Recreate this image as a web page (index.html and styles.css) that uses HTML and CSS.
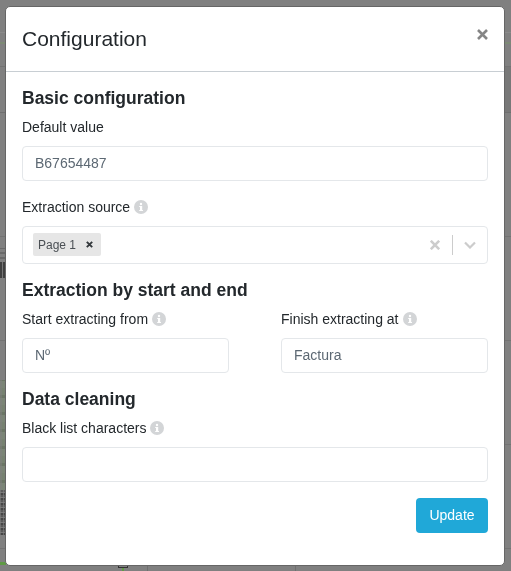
FILE: index.html
```html
<!DOCTYPE html>
<html>
<head>
    <meta charset="utf-8">
    <title>Configuration</title>
    <link rel="stylesheet" href="styles.css">
</head>
<body>
    <!-- page behind the dialog, only its edges show -->
    <div class="page">
        <div class="page-top"></div>
        <div class="page-head"></div>
        <div class="page-tabs"></div>
        <div class="page-bar"></div>
        <div class="page-row page-row-first"></div>
        <div class="page-row"></div>
        <div class="page-row"></div>
        <div class="page-row"></div>
        <div class="page-foot">
            <div class="foot-cell foot-check"><span class="check"></span><span class="check-line"></span></div>
            <div class="foot-cell"></div>
        </div>
        <div class="page-side">
            <div class="side-gap side-gap-top"></div>
            <div class="side-text"></div>
            <div class="side-bars"></div>
            <div class="side-gap side-gap-mid"></div>
            <div class="side-green"></div>
            <div class="side-code"></div>
            <div class="side-gap side-gap-low"></div>
            <div class="side-line"></div>
        </div>
    </div>

    <div class="modal">
        <div class="modal-header">
            <h5 class="modal-title">Configuration</h5>
            <button class="close" type="button">
                <svg width="11" height="11" viewBox="0 0 11 11"><path d="M1 1l9 9M10 1l-9 9" stroke="#858585" stroke-width="2.6" fill="none"/></svg>
            </button>
        </div>
        <div class="modal-body">
            <h3 class="section">Basic configuration</h3>
            <label class="label">Default value</label>
            <input class="input" type="text" value="B67654487">

            <label class="label label-source">Extraction source
                <svg class="info" viewBox="0 0 14 14"><circle cx="7" cy="7" r="7" fill="#d3d5d7"/><rect x="6" y="6" width="2.2" height="5" fill="#fff"/><rect x="5.2" y="6" width="2" height="1" fill="#fff"/><rect x="5.2" y="10" width="3.8" height="1" fill="#fff"/><circle cx="7" cy="4" r="1.2" fill="#fff"/></svg>
            </label>
            <div class="select">
                <div class="select-values">
                    <span class="tag">Page 1
                        <svg class="tag-x" width="7" height="7" viewBox="0 0 7 7"><path d="M.8.8l5.4 5.4M6.200.8L.8 6.200" stroke="#33383c" stroke-width="1.900" fill="none"/></svg>
                    </span>
                </div>
                <svg class="select-clear" width="10" height="10" viewBox="0 0 10 10"><path d="M.8.8l8.400 8.400M9.200.8L.8 9.200" stroke="#cccccc" stroke-width="2.600" fill="none"/></svg>
                <span class="select-sep"></span>
                <svg class="select-arrow" width="12" height="8" viewBox="0 0 12 8"><path d="M1 1.500l5 5 5-5" stroke="#cccccc" stroke-width="2.200" fill="none"/></svg>
            </div>

            <h3 class="section section-start">Extraction by start and end</h3>
            <div class="row">
                <div class="col">
                    <label class="label">Start extracting from
                        <svg class="info" viewBox="0 0 14 14"><circle cx="7" cy="7" r="7" fill="#d3d5d7"/><rect x="6" y="6" width="2.2" height="5" fill="#fff"/><rect x="5.2" y="6" width="2" height="1" fill="#fff"/><rect x="5.2" y="10" width="3.8" height="1" fill="#fff"/><circle cx="7" cy="4" r="1.2" fill="#fff"/></svg>
                    </label>
                    <input class="input" type="text" value="Nº">
                </div>
                <div class="col">
                    <label class="label">Finish extracting at
                        <svg class="info" viewBox="0 0 14 14"><circle cx="7" cy="7" r="7" fill="#d3d5d7"/><rect x="6" y="6" width="2.2" height="5" fill="#fff"/><rect x="5.2" y="6" width="2" height="1" fill="#fff"/><rect x="5.2" y="10" width="3.8" height="1" fill="#fff"/><circle cx="7" cy="4" r="1.2" fill="#fff"/></svg>
                    </label>
                    <input class="input" type="text" value="Factura">
                </div>
            </div>

            <h3 class="section section-clean">Data cleaning</h3>
            <label class="label">Black list characters
                <svg class="info" viewBox="0 0 14 14"><circle cx="7" cy="7" r="7" fill="#d3d5d7"/><rect x="6" y="6" width="2.2" height="5" fill="#fff"/><rect x="5.2" y="6" width="2" height="1" fill="#fff"/><rect x="5.2" y="10" width="3.8" height="1" fill="#fff"/><circle cx="7" cy="4" r="1.2" fill="#fff"/></svg>
            </label>
            <input class="input" type="text" value="">

            <div class="actions">
                <button class="btn" type="button">Update</button>
            </div>
        </div>
    </div>
</body>
</html>
```

FILE: styles.css
```css
* {
    box-sizing: border-box;
}
html, body {
    margin: 0;
    padding: 0;
    height: 100%;
    overflow: hidden;
}
body {
    font-family: "Liberation Sans", Arial, sans-serif;
    background-color: #808080;
    color: #23282c;
    font-size: 14px;
}

/* dimmed page behind the dialog */
.page {
    height: 571px;
    overflow: hidden;
    position: relative;
}
.page-top {
    height: 33px;
    border-bottom: 1px solid #8a8a8a;
}
.page-head {
    height: 11px;
    border-bottom: 2px solid #7d8a75;
}
.page-tabs {
    height: 23px;
    border-bottom: 1px solid #737373;
}
.page-bar {
    height: 46px;
    background: linear-gradient(90deg, #808080 0 6px, #787878 6px);
    border-bottom: 1px solid #6f6f6f;
}
.page-row {
    height: 104px;
    border-bottom: 1px solid #737373;
}
.page-row-first {
    height: 124px;
}
.page-foot {
    display: flex;
    height: 22px;
}
.foot-cell {
    width: 148px;
    border-right: 1px solid #6f6f6f;
}
.foot-check {
    padding-left: 118px;
}
.check {
    display: block;
    width: 10px;
    height: 19px;
    border: 1px solid #333333;
    border-top: none;
}
.check-line {
    display: block;
    width: 2px;
    height: 3px;
    margin-left: 4px;
    background: #5f9a45;
}

/* left edge: thumbnails of the rows */
.page-side {
    position: absolute;
    top: 0;
    left: 0;
    width: 6px;
    height: 571px;
    display: flex;
    flex-direction: column;
}
.side-gap-top {
    height: 248px;
}
.side-text {
    height: 14px;
    background: repeating-linear-gradient(0deg, #808080 0 3px, #6a6a6a 3px 5px);
}
.side-bars {
    height: 16px;
    background: repeating-linear-gradient(90deg, #404040 0 2px, #777777 2px 3px);
}
.side-gap-mid {
    height: 102px;
}
.side-green {
    height: 110px;
    background:
        repeating-linear-gradient(90deg, rgba(128,128,128,0.5) 0 2px, rgba(128,128,128,0) 2px 5px),
        repeating-linear-gradient(0deg, #7b8576 0 7px, #6b7665 7px 10px, #778271 10px 17px);
}
.side-code {
    height: 45px;
    background:
        repeating-linear-gradient(90deg, rgba(128,128,128,0.6) 0 1px, rgba(128,128,128,0) 1px 3px),
        repeating-linear-gradient(0deg, #454545 0 2px, #777777 2px 3px, #5a5a5a 3px 5px);
}
.side-gap-low {
    height: 27px;
}
.side-line {
    height: 3px;
    background: #5f9a45;
}

/* dialog */
.modal {
    position: absolute;
    top: 6px;
    left: 5px;
    will-change: transform;
    width: 500px;
    height: 560px;
    background: #fff;
    border: 1px solid #666666;
    border-radius: 5px;
}
.modal-header {
    height: 65px;
    padding: 16px;
    border-bottom: 1px solid #c8ced3;
    display: flex;
    justify-content: space-between;
}
.modal-title {
    margin: 0;
    font-size: 21px;
    font-weight: 400;
    line-height: 31px;
}
.close {
    background: none;
    border: none;
    padding: 0;
    margin: 6px 0 0;
    height: 11px;
    line-height: 0;
    cursor: pointer;
}
.modal-body {
    padding: 16px;
}
.section {
    margin: 0 0 8px;
    font-size: 17.5px;
    font-weight: 700;
    line-height: 21px;
}
.section-start {
    margin-top: 16px;
}
.section-clean {
    margin-top: 16px;
}
.label {
    display: flex;
    align-items: center;
    gap: 4px;
    line-height: 21px;
    margin-bottom: 8px;
}
.label-source {
    margin-top: 16px;
}
.info {
    width: 14px;
    height: 14px;
    margin-top: -2px;
}
.input {
    display: block;
    width: 100%;
    height: 35px;
    padding: 4px 12px 6px;
    border: 1px solid #e4e7ea;
    border-radius: 4px;
    font-family: inherit;
    font-size: 14px;
    color: #5c6873;
    background: #fff;
}
.select {
    height: 38px;
    border: 1px solid #e4e7ea;
    border-radius: 4px;
    display: flex;
    align-items: center;
    padding: 0 11px 0 10px;
}
.select-values {
    flex: 1;
    display: flex;
    margin-top: -1px;
}
.tag {
    display: inline-flex;
    align-items: center;
    height: 23px;
    width: 68px;
    padding-left: 5px;
    gap: 10px;
    background: #e6e6e6;
    border-radius: 2px;
    font-size: 12px;
    color: #4a4f54;
}
.select-clear {
    margin-right: 12px;
}
.select-sep {
    width: 1px;
    height: 20px;
    background: #cccccc;
    margin-right: 11px;
}
.row {
    display: flex;
    gap: 52px;
}
.col {
    flex: 1;
}
.actions {
    display: flex;
    justify-content: flex-end;
    margin-top: 16px;
}
.btn {
    height: 35px;
    width: 72px;
    padding: 0 0 2px;
    border: none;
    border-radius: 4px;
    background: #20a8d8;
    color: #fff;
    font-family: inherit;
    font-size: 14px;
    cursor: pointer;
}
```
